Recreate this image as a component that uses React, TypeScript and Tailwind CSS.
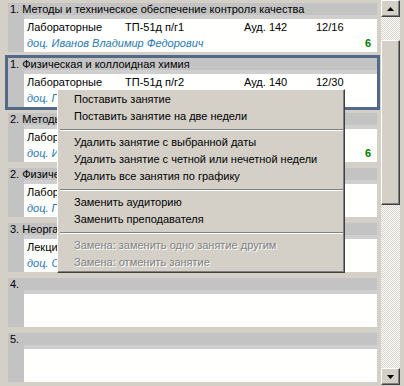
import React from 'react';

type Lesson = {
  title: string;
  kind: string;
  group: string;
  room: string;
  date: string;
  teacher: string;
  hours: string;
};

const lessons: (Lesson | null)[] = [
  {
    title: '1. Методы и техническое обеспечение контроля качества',
    kind: 'Лабораторные',
    group: 'ТП-51д п/г1',
    room: 'Ауд. 142',
    date: '12/16',
    teacher: 'доц. Иванов Владимир Федорович',
    hours: '6',
  },
  {
    title: '1. Физическая и коллоидная химия',
    kind: 'Лабораторные',
    group: 'ТП-51д п/г2',
    room: 'Ауд. 140',
    date: '12/30',
    teacher: 'доц. Петрова Ольга Николаевна',
    hours: '',
  },
  {
    title: '2. Методы и техническое обеспечение контроля качества',
    kind: 'Лабораторные',
    group: 'ТП-51д п/г2',
    room: 'Ауд. 142',
    date: '12/16',
    teacher: 'доц. Иванов Владимир Федорович',
    hours: '6',
  },
  {
    title: '2. Физическая и коллоидная химия',
    kind: 'Лабораторные',
    group: 'ТП-51д п/г1',
    room: 'Ауд. 140',
    date: '12/30',
    teacher: 'доц. Петрова Ольга Николаевна',
    hours: '',
  },
  {
    title: '3. Неорганическая химия',
    kind: 'Лекции',
    group: 'ТП-51д',
    room: 'Ауд. 120',
    date: '12/30',
    teacher: 'доц. Сидоров Павел Иванович',
    hours: '',
  },
  null,
  null,
];

const emptyTitles = ['4.', '5.'];

const LessonItem: React.FC<{ lesson: Lesson | null; title: string; selected?: boolean }> = ({
  lesson,
  title,
  selected,
}) => {
  return (
    <div
      className={`shrink-0 h-[55px] border-[3px] ${selected ? 'border-[#52698a]' : 'border-transparent'}`}
    >
      <div className="h-full bg-[#c3c3c3] flex flex-col">
        <div className="h-[12px] leading-[13px] pl-[2px] whitespace-nowrap">{title}</div>
        <div className="h-[4px] ml-[16px] bg-[#cfcfcf]" />
        <div className="flex-1 ml-[16px] bg-[#fffffe] pl-[3px] pr-[6px]">
          {lesson && (
            <>
              <div className="flex h-[16px] leading-[16px] whitespace-nowrap">
                <span className="w-[98px]">{lesson.kind}</span>
                <span className="w-[119px]">{lesson.group}</span>
                <span className="w-[72px]">{lesson.room}</span>
                <span>{lesson.date}</span>
              </div>
              <div className="flex justify-between h-[16px] leading-[16px] whitespace-nowrap">
                <span className="italic text-[#2a78b0]">{lesson.teacher}</span>
                <span className="font-bold text-[#007a00]">{lesson.hours}</span>
              </div>
            </>
          )}
        </div>
      </div>
    </div>
  );
};

const MenuItem: React.FC<{ label: string; disabled?: boolean }> = ({ label, disabled }) => (
  <div
    className={`h-[17px] leading-[17px] pl-[15px] whitespace-nowrap ${
      disabled ? 'text-[#808080] [text-shadow:1px_1px_0_#ffffff]' : 'text-black'
    }`}
  >
    {label}
  </div>
);

const Separator: React.FC = () => (
  <div className="h-[9px] flex flex-col justify-center px-[1px]">
    <div className="h-px bg-[#808080]" />
    <div className="h-px bg-white" />
  </div>
);

const ScrollButton: React.FC<{ up?: boolean }> = ({ up }) => (
  <div className="h-[17px] shrink-0 bg-[#d4d0c8] border border-t-white border-l-white border-r-[#404040] border-b-[#404040] shadow-[inset_-1px_-1px_0_#808080] flex items-center justify-center">
    <svg width="7" height="4" viewBox="0 0 7 4">
      {up ? <path d="M3.5 0L7 4H0z" fill="#000" /> : <path d="M0 0h7L3.5 4z" fill="#000" />}
    </svg>
  </div>
);

const checker =
  'bg-[repeating-conic-gradient(#ffffff_0_25%,#d4d0c8_0_50%)] bg-[length:2px_2px]';

export default function App() {
  return (
    <div className="relative w-[404px] h-[386px] overflow-hidden bg-[#d4d0c8] flex text-[11px] text-black font-['Liberation_Sans',Arial,sans-serif]">
      {/* list */}
      <div className="w-[381px] h-full pl-[5px] pr-[1px] flex flex-col overflow-hidden">
        {lessons.map((l, i) => (
          <LessonItem
            key={i}
            lesson={l}
            title={l ? l.title : emptyTitles[i - 5]}
            selected={i === 1}
          />
        ))}
      </div>

      {/* scrollbar */}
      <div className="w-[19px] h-full flex flex-col pb-[1px]">
        <ScrollButton up />
        <div className={`h-[23px] shrink-0 ${checker}`} />
        <div className="h-[165px] shrink-0 bg-[#d4d0c8] border border-t-white border-l-white border-r-[#404040] border-b-[#404040] shadow-[inset_-1px_-1px_0_#808080]" />
        <div className={`flex-1 ${checker}`} />
        <ScrollButton />
      </div>

      {/* context menu */}
      <div className="absolute left-[57px] top-[89px] w-[288px] bg-[#d4d0c8] border border-t-white border-l-white border-r-[#404040] border-b-[#404040] shadow-[inset_-1px_-1px_0_#808080] py-[1px] pl-[1px]">
        <MenuItem label="Поставить занятие" />
        <MenuItem label="Поставить занятие на две недели" />
        <Separator />
        <MenuItem label="Удалить занятие с выбранной даты" />
        <MenuItem label="Удалить занятие с четной или нечетной недели" />
        <MenuItem label="Удалить все занятия по графику" />
        <Separator />
        <MenuItem label="Заменить аудиторию" />
        <MenuItem label="Заменить преподавателя" />
        <Separator />
        <MenuItem label="Замена: заменить одно занятие другим" disabled />
        <MenuItem label="Замена: отменить занятие" disabled />
      </div>
    </div>
  );
}
